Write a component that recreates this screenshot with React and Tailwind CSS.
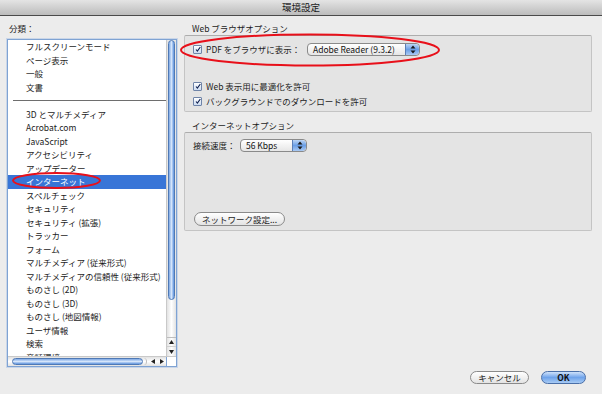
import React from "react";

const font = { fontFamily: '"Noto Sans CJK JP", "Noto Sans", sans-serif' };

const items = [
  "フルスクリーンモード",
  "ページ表示",
  "一般",
  "文書",
  "-",
  "3D とマルチメディア",
  "Acrobat.com",
  "JavaScript",
  "アクセシビリティ",
  "アップデーター",
  "インターネット",
  "スペルチェック",
  "セキュリティ",
  "セキュリティ (拡張)",
  "トラッカー",
  "フォーム",
  "マルチメディア (従来形式)",
  "マルチメディアの信頼性 (従来形式)",
  "ものさし (2D)",
  "ものさし (3D)",
  "ものさし (地図情報)",
  "ユーザ情報",
  "検索",
  "音話環境",
];

function Check() {
  return (
    <div className="w-[9px] h-[9px] shrink-0 rounded-[1px] border border-[#6f84a8] bg-gradient-to-b from-[#ffffff] to-[#cddcf2] flex items-center justify-center">
      <svg width="9" height="9" viewBox="0 0 9 9" className="-mt-[1px] ml-[1px]">
        <path d="M1.5 4.5 L3.6 7 L8 0.8" fill="none" stroke="#0d1f4f" strokeWidth="1.6" />
      </svg>
    </div>
  );
}

function PopupArrows() {
  return (
    <div className="w-[14px] h-full shrink-0 rounded-r-[4px] border-l border-[#5b7fb8] bg-gradient-to-b from-[#bcd5f5] via-[#6b9fe6] to-[#a9c9f3] flex items-center justify-center">
      <svg width="6" height="9" viewBox="0 0 6 9">
        <path d="M3 0.5 L5.5 3.5 L0.5 3.5 Z" fill="#1b1b1b" />
        <path d="M3 8.5 L5.5 5.5 L0.5 5.5 Z" fill="#1b1b1b" />
      </svg>
    </div>
  );
}

function Popup({ label, width }) {
  return (
    <div
      className={`${width} h-[13px] shrink-0 flex items-stretch rounded-[4px] border border-[#8a8a8a] bg-gradient-to-b from-[#ffffff] to-[#e6e6e6] overflow-hidden`}
    >
      <div className="flex-1 pl-[5px] text-[8.5px] leading-[11px] text-[#111] whitespace-nowrap">
        {label}
      </div>
      <PopupArrows />
    </div>
  );
}

function ListBox() {
  return (
    <div className="w-[170px] h-[328px] border border-[#7fa3d3] bg-white flex flex-col shadow-[0_0_0_1px_rgba(140,175,225,0.35)]">
      <div className="h-[316px] flex">
        <div className="w-[158px] overflow-hidden">
          {items.map((it, i) =>
            it === "-" ? (
              <div key={i} className="h-[13.5px] flex items-center pl-[5px]">
                <div className="h-px w-full bg-[#6e6e6e]" />
              </div>
            ) : (
              <div
                key={i}
                className={`h-[13.5px] leading-[13.5px] pl-[18px] text-[8.5px] whitespace-nowrap ${
                  i === 10 ? "bg-[#3875d7] text-white" : "text-[#1c1c1c]"
                }`}
              >
                {it}
              </div>
            )
          )}
        </div>
        <div className="w-[10px] flex flex-col border-l border-[#c9c9c9] bg-gradient-to-r from-[#e2e2e2] via-[#ffffff] to-[#e2e2e2]">
          <div className="h-[260px] mx-[1px] rounded-full border border-[#4f79b5] bg-gradient-to-r from-[#7ea8e4] via-[#d5e5fa] to-[#5f93dd]" />
          <div className="flex-1 border-b border-[#bdbdbd]" />
          <div className="h-[9px] flex items-center justify-center border-b border-[#d0d0d0]">
            <svg width="5" height="4" viewBox="0 0 5 4"><path d="M2.5 0 L5 4 L0 4 Z" fill="#222" /></svg>
          </div>
          <div className="h-[9px] flex items-center justify-center">
            <svg width="5" height="4" viewBox="0 0 5 4"><path d="M2.5 4 L5 0 L0 0 Z" fill="#222" /></svg>
          </div>
        </div>
      </div>
      <div className="h-[10px] flex border-t border-[#c9c9c9]">
        <div className="w-[158px] flex items-stretch bg-gradient-to-b from-[#e2e2e2] via-[#ffffff] to-[#e2e2e2]">
          <div className="ml-[4px] w-[131px] my-[1px] rounded-full border border-[#4f79b5] bg-gradient-to-b from-[#7ea8e4] via-[#d5e5fa] to-[#5f93dd]" />
          <div className="w-[4px] my-[1px] rounded-r-full border-r border-[#bdbdbd]" />
          <div className="flex-1 flex items-center justify-around pl-[2px]">
            <svg width="4" height="5" viewBox="0 0 4 5"><path d="M0 2.5 L4 0 L4 5 Z" fill="#222" /></svg>
            <svg width="4" height="5" viewBox="0 0 4 5"><path d="M4 2.5 L0 0 L0 5 Z" fill="#222" /></svg>
          </div>
        </div>
        <div className="w-[10px] border-l border-[#7fa3d3] bg-white" />
      </div>
    </div>
  );
}

export default function App() {
  return (
    <div className="relative w-[602px] h-[394px] bg-[#ececec] flex flex-col overflow-hidden" style={font}>
      <div className="h-[16px] shrink-0 border-b border-[#4a4a4a] bg-gradient-to-b from-[#e4e4e4] to-[#bcbcbc] flex items-center justify-center text-[9.5px] text-[#1a1a1a]">
        環境設定
      </div>

      <div className="flex-1 flex pl-[7px] pr-[10px]">
        <div className="w-[170px] flex flex-col">
          <div className="mt-[6px] h-[12px] leading-[12px] pl-[2px] mb-[5px] text-[8.5px] text-[#1c1c1c]">分類：</div>
          <ListBox />
        </div>

        <div className="ml-[7px] flex-1 flex flex-col">
          <div className="mt-[6px] h-[12px] leading-[12px] pl-[8px] mb-[1px] text-[8.5px] text-[#1c1c1c]">
            Web ブラウザオプション
          </div>
          <div className="h-[77px] border border-[#c4c4c4] border-t-[#adadad] bg-[#e4e4e4] rounded-[2px] pl-[8px] pt-[7px] flex flex-col text-[8.5px] text-[#1c1c1c]">
            <div className="h-[13px] flex items-center">
              <Check />
              <span className="ml-[4px] w-[101px] whitespace-nowrap">PDF をブラウザに表示：</span>
              <Popup label="Adobe Reader (9.3.2)" width="w-[113px]" />
            </div>
            <div className="mt-[24px] h-[13px] flex items-center">
              <Check />
              <span className="ml-[4px] whitespace-nowrap">Web 表示用に最適化を許可</span>
            </div>
            <div className="mt-[2px] h-[13px] flex items-center">
              <Check />
              <span className="ml-[4px] whitespace-nowrap">バックグラウンドでのダウンロードを許可</span>
            </div>
          </div>

          <div className="mt-[7px] h-[12px] leading-[12px] pl-[8px] mb-[1px] text-[8.5px] text-[#1c1c1c]">
            インターネットオプション
          </div>
          <div className="h-[99px] border border-[#c4c4c4] border-t-[#adadad] bg-[#e4e4e4] rounded-[2px] pl-[8px] pt-[6px] pb-[4px] flex flex-col justify-between text-[8.5px] text-[#1c1c1c]">
            <div className="h-[13px] flex items-center">
              <span className="w-[47px] whitespace-nowrap">接続速度：</span>
              <Popup label="56 Kbps" width="w-[67px]" />
            </div>
            <div className="ml-[1px] w-[91px] h-[14px] rounded-full border border-[#8a8a8a] bg-gradient-to-b from-[#ffffff] to-[#e3e3e3] flex items-center justify-center whitespace-nowrap">
              ネットワーク設定...
            </div>
          </div>

          <div className="flex-1" />
          <div className="flex justify-end gap-[12px] pr-[6px] pb-[10px] text-[8.5px]">
            <div className="w-[59px] h-[13px] rounded-full border border-[#8a8a8a] bg-gradient-to-b from-[#ffffff] to-[#e3e3e3] flex items-center justify-center text-[#1c1c1c]">
              キャンセル
            </div>
            <div className="w-[45px] h-[13px] rounded-full border border-[#4a6fa8] bg-gradient-to-b from-[#cfe2fa] via-[#6fa3ea] to-[#a8cbf4] flex items-center justify-center font-bold text-[#111]">
              OK
            </div>
          </div>
        </div>
      </div>

      <svg className="absolute inset-0 pointer-events-none" width="602" height="394">
        <ellipse cx="310" cy="50" rx="129" ry="15.5" fill="none" stroke="#e8101a" strokeWidth="2" />
        <ellipse cx="56.5" cy="180.5" rx="43.5" ry="7.5" fill="none" stroke="#e8101a" strokeWidth="2" />
      </svg>
    </div>
  );
}
